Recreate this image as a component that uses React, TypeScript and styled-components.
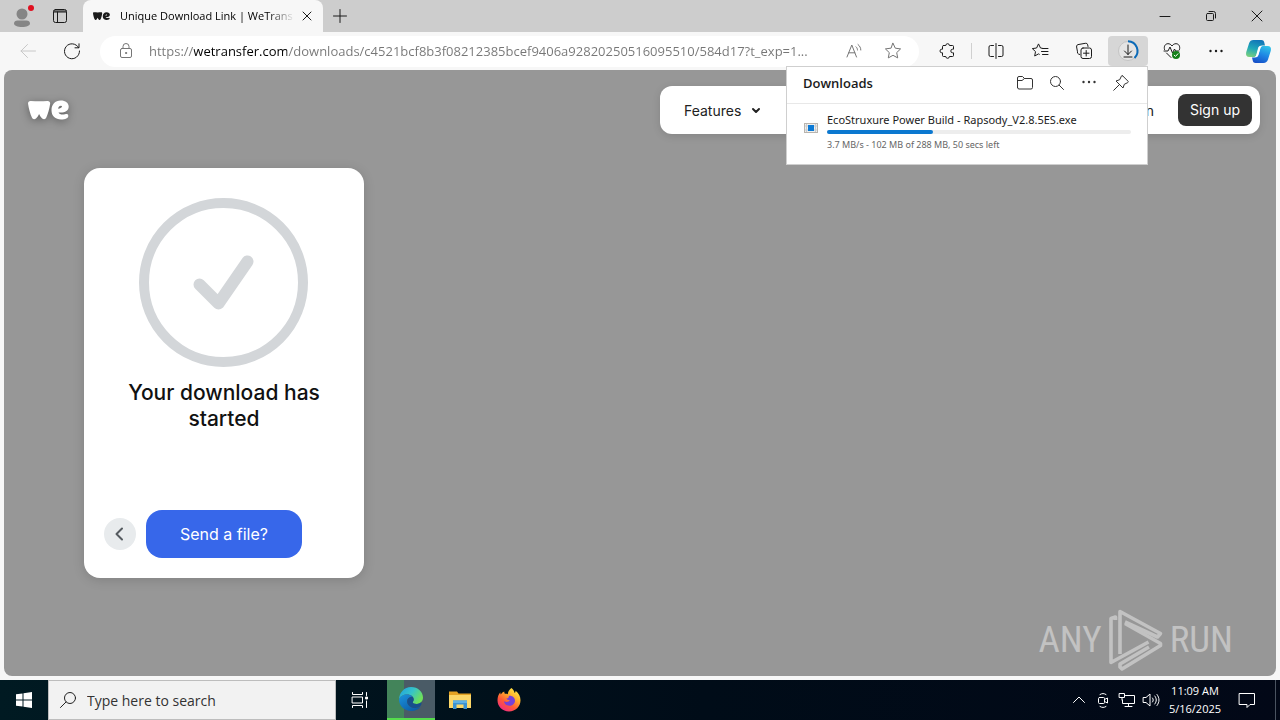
import React from "react";
import styled, { createGlobalStyle } from "styled-components";

const ui = `"Open Sans", "Noto Sans", sans-serif`;
const uiWide = `"Noto Sans", "Open Sans", sans-serif`;
const brand = `Inter, "Liberation Sans", sans-serif`;

const GlobalStyle = createGlobalStyle`
  *, *::before, *::after { box-sizing: border-box; }
  body { margin: 0; font-family: ${ui}; background: #f7f7f7; color: #1b1b1b; }
  button, input { font: inherit; color: inherit; border: 0; padding: 0; margin: 0; background: none; outline: 0; }
  svg { display: block; flex: none; overflow: visible; }
`;

const Desktop = styled.div`
  display: flex;
  flex-direction: column;
  min-height: 100vh;
`;

/* Browser chrome */

const TabStrip = styled.div`
  display: flex;
  height: 32px;
  background: #cdcdcd;
`;

const StripButton = styled.button<{ $width: number }>`
  display: grid;
  place-items: center;
  width: ${(p) => p.$width}px;
  height: 32px;
  flex: none;
`;

const Tab = styled.div`
  display: flex;
  align-items: center;
  width: 240px;
  margin-left: 7px;
  padding: 0 8px 0 10px;
  background: #f7f7f7;
  border-radius: 8px 8px 0 0;
`;

const TabTitle = styled.span`
  flex: 1;
  margin: 0 4px 0 10px;
  white-space: nowrap;
  font-size: 11px;
  line-height: 16px;
  color: #000;
  mask-image: linear-gradient(to right, #000 calc(100% - 28px), transparent);
`;

const TabClose = styled.button`
  display: grid;
  place-items: center;
  width: 16px;
  height: 16px;
`;

const WindowControls = styled.div`
  display: flex;
  margin-left: auto;
`;

const Toolbar = styled.div`
  position: relative;
  z-index: 2;
  display: flex;
  align-items: center;
  gap: 4px;
  height: 38px;
  padding: 0 4px 0 8px;
  background: #f7f7f7;
`;

const ToolButton = styled.button<{ $active?: boolean; $narrow?: boolean }>`
  display: grid;
  place-items: center;
  flex: none;
  width: ${(p) => (p.$narrow ? 36 : 40)}px;
  height: 30px;
  border-radius: 4px;
  color: #1b1b1b;
  background: ${(p) => (p.$active ? "#d6d6d6" : "transparent")};
  &:disabled { color: #c8c8c8; }
`;

const AddressBar = styled.form`
  display: flex;
  align-items: center;
  flex: 1;
  min-width: 0;
  height: 31px;
  margin: 0 4px;
  padding: 0 16px;
  gap: 13px;
  border-radius: 16px;
  background: #fff;
  color: #767676;
`;

const Url = styled.input`
  flex: 1;
  min-width: 0;
  height: 20px;
  font-size: 13px;
  color: #6e6e6e;
  background: linear-gradient(to right, #767676 45px, #000 45px, #000 138px, #767676 138px);
  background-clip: text;
  -webkit-text-fill-color: transparent;
`;

const FieldButton = styled.button`
  display: grid;
  place-items: center;
  width: 20px;
  height: 20px;
  margin-left: 6px;
`;

const Divider = styled.span`
  width: 1px;
  height: 16px;
  background: #d0d0d0;
`;

/* Downloads flyout */

const FlyoutAnchor = styled.div`
  position: relative;
`;

const Flyout = styled.section`
  position: absolute;
  top: 100%;
  right: 0;
  width: 362px;
  background: #fff;
  border: 1px solid #cfcfcf;
`;

const FlyoutHeader = styled.header`
  display: flex;
  align-items: center;
  height: 37px;
  padding: 0 10px 4px 16px;
  border-bottom: 1px solid #e8e8e8;
`;

const FlyoutTitle = styled.h2`
  flex: 1;
  margin: 0;
  font-size: 13px;
  line-height: 20px;
  font-weight: 600;
`;

const FlyoutButton = styled.button`
  display: grid;
  place-items: center;
  width: 32px;
  height: 28px;
  color: #333;
`;

const DownloadItem = styled.div`
  display: flex;
  align-items: flex-start;
  gap: 8px;
  height: 60px;
  padding: 8px 16px 0;
`;

const FileIcon = styled.svg`
  margin-top: 8px;
`;

const DownloadBody = styled.div`
  display: flex;
  flex-direction: column;
  flex: 1;
`;

const FileName = styled.label`
  font-family: ${uiWide};
  font-size: 11px;
  line-height: 16px;
`;

const Progress = styled.progress`
  appearance: none;
  width: 100%;
  height: 4px;
  margin: 2px 0 4px;
  border: 0;
  &::-webkit-progress-bar { background: #ededed; border-radius: 2px; }
  &::-webkit-progress-value { background: #0b78d0; border-radius: 2px; }
`;

const FileStatus = styled.span`
  font-family: ${uiWide};
  font-size: 9px;
  line-height: 14px;
  color: #666;
`;

/* Page */

const Viewport = styled.main`
  position: relative;
  flex: 1;
  margin: 0 4px 4px;
  padding: 16px 16px 98px;
  border-radius: 8px;
  background: #979797;
  font-family: ${brand};
`;

const SiteHeader = styled.header`
  display: flex;
  align-items: center;
  justify-content: space-between;
  padding-left: 8px;
`;

const LogoLink = styled.a`
  display: block;
  filter: drop-shadow(0 2px 4px rgba(0, 0, 0, 0.35));
`;

const SiteNav = styled.nav`
  display: flex;
  align-items: center;
  justify-content: space-between;
  width: min(600px, 80%);
  height: 48px;
  padding: 8px 8px 8px 24px;
  border-radius: 12px;
  background: #fff;
  font-size: 14px;
  box-shadow: 0 2px 8px rgba(0, 0, 0, 0.12);
`;

const NavButton = styled.button`
  display: flex;
  align-items: center;
  gap: 10px;
  color: #222;
`;

const NavGroup = styled.div`
  display: flex;
  align-items: center;
  gap: 24px;
`;

const NavLink = styled.a`
  color: #222;
  text-decoration: none;
`;

const SignUp = styled.a`
  height: 32px;
  padding: 0 12px;
  border-radius: 8px;
  line-height: 32px;
  background: #333;
  color: #fff;
  text-decoration: none;
`;

const Card = styled.section`
  display: flex;
  flex-direction: column;
  align-items: center;
  width: 280px;
  min-height: 410px;
  margin: 34px 0 0 64px;
  padding: 30px 20px 20px;
  border-radius: 16px;
  background: #fff;
  box-shadow: 0 2px 12px rgba(0, 0, 0, 0.15);
`;

const CardTitle = styled.h1`
  width: 210px;
  margin: 13px 0 0;
  font-size: 21px;
  line-height: 26px;
  font-weight: 500;
  text-align: center;
  color: #111;
`;

const CardActions = styled.div`
  display: flex;
  align-items: center;
  align-self: stretch;
  gap: 10px;
  margin-top: auto;
`;

const BackButton = styled.button`
  display: grid;
  place-items: center;
  width: 32px;
  height: 32px;
  border-radius: 50%;
  background: #e8ebed;
  color: #555b60;
`;

const SendButton = styled.button`
  width: 156px;
  height: 48px;
  border-radius: 16px;
  background: #3767ea;
  color: #fff;
  font-size: 16px;
`;

const Watermark = styled.div`
  position: absolute;
  right: 43px;
  bottom: 5px;
  display: flex;
  align-items: center;
  gap: 6px;
  color: #c2c2c2;
  font-family: "Roboto Condensed", "Liberation Sans Narrow", Roboto, sans-serif;
  font-size: 37px;
  line-height: 62px;
  font-weight: 400;
`;

/* Taskbar */

const Taskbar = styled.footer`
  display: flex;
  height: 40px;
  background: linear-gradient(to right, #001a22, #000c18 55%, #020817);
  color: #fff;
`;

const TaskButton = styled.button<{ $open?: boolean }>`
  display: grid;
  place-items: center;
  width: 48px;
  height: 40px;
  background: ${(p) => (p.$open ? "linear-gradient(to right, #43845a 17px, #4a5b66 17px)" : "none")};
  border-bottom: ${(p) => (p.$open ? "2px solid #55dd4c" : "0")};
`;

const TaskApps = styled.div`
  display: flex;
  gap: 1px;
  margin-left: 3px;
`;

const TaskSearch = styled.label`
  display: flex;
  align-items: center;
  width: 288px;
  padding: 0 11px;
  gap: 11px;
  border: 1px solid #bdbdbd;
  background: #f2f2f2;
  color: #222;
`;

const TaskSearchInput = styled.input`
  flex: 1;
  min-width: 0;
  height: 24px;
  font-size: 14px;
  &::placeholder { color: #333; opacity: 1; }
`;

const Tray = styled.div`
  display: flex;
  align-items: center;
  margin-left: auto;
  padding-right: 4px;
`;

const TrayButton = styled.button<{ $wide?: boolean }>`
  display: grid;
  place-items: center;
  width: ${(p) => (p.$wide ? 40 : 24)}px;
  height: 40px;
`;

const Clock = styled.time`
  width: 64px;
  font-size: 11px;
  line-height: 18px;
  text-align: center;
`;

const PeekEdge = styled.span`
  width: 1px;
  height: 40px;
  margin-left: 8px;
  background: #4a5360;
`;

/* Drawings */

function Line({ size = 20, children, w = 1 }: { size?: number; w?: number; children: React.ReactNode }) {
  return (
    <svg width={size} height={size} viewBox={`0 0 ${size} ${size}`} fill="none" stroke="currentColor" strokeWidth={w} strokeLinecap="round" strokeLinejoin="round" aria-hidden="true">
      {children}
    </svg>
  );
}

function WeLogo({ width, color }: { width: number; color: string }) {
  return (
    <svg width={width} height={(width * 20) / 41} viewBox="0 0 41 20" fill={color} aria-hidden="true">
      <path d="M2.6.9C.7 1-.2 2.100 .1 4.100.8 9 2.300 14.300 3.900 17.600c.9 2 2.600 2.200 4.100.9 1.300-1.100 2.300-2.700 3.100-4.500.8 1.800 1.800 3.400 3.100 4.500 1.500 1.300 3.200 1.100 4.100-.9 1.500-3.300 3.100-8.500 3.800-13.500.3-2.200-.7-3.300-2.700-3.200C13.800 1.400 8.200 1.300 2.600.9Z" />
      <path d="M32.800.6C27 .6 23.500 4.700 23.500 10.200c0 5.900 3.900 9.200 9.600 9.200 4.300 0 7.200-1.500 7.200-3.500 0-1.600-1.200-2.200-3.200-1.700-3.400.8-5.500.2-6.600-1.800 5.600.7 10.200-1.200 10.200-5.600C40.700 3 37.500.6 32.800.6Zm-2.700 8.200c.3-2 1.600-3.200 3-3 1.700.3 1.300 2.300-3 3Z" />
    </svg>
  );
}

function EdgeIcon() {
  return (
    <svg width="24" height="24" viewBox="0 0 24 24" aria-hidden="true">
      <defs>
        <linearGradient id="edgeTop" x1="0" y1="0" x2="1" y2="0.5">
          <stop offset="0" stopColor="#1f9fe0" />
          <stop offset="0.55" stopColor="#36c3c9" />
          <stop offset="1" stopColor="#6ee05a" />
        </linearGradient>
        <linearGradient id="edgeLow" x1="0" y1="0" x2="0.8" y2="1">
          <stop offset="0" stopColor="#1b93dd" />
          <stop offset="1" stopColor="#0c59a4" />
        </linearGradient>
      </defs>
      <path d="M0 12.500C.3 5.500 5.300 0 12.100 0 19 0 24 5 24 10.500c0 4-3 6.500-6.500 6.500-2.500 0-3.800-.8-3.800-1.700 0-.7 1-1 1-2.700C14.700 9.800 12 7.500 8.300 7.500 4 7.500 1 9.500 0 12.500Z" fill="url(#edgeTop)" />
      <path d="M0 12.500c1-3 4-5 8.300-5 2.300 0 4.200.9 5.300 2.300-3.400-.4-5.400 1.900-5.400 4.600 0 4 4 6.600 8.300 6.600 2 0 3.700-.5 5.300-1.500C19.800 22.300 16.300 24 12.300 24 5.500 24 0 19 0 12.500Z" fill="url(#edgeLow)" />
      <path d="M8.200 14.400c0-2.700 2-5 5.400-4.600.7.8 1.100 1.800 1.100 2.800 0 1.700-1 2-1 2.700 0 .9 1.300 1.700 3.800 1.700 1.800 0 3.400-.6 4.600-1.700.6.4.6 1.700-.3 3.200-1.600 1.800-3.300 2.500-5.300 2.500-4.300 0-8.300-2.600-8.300-6.600Z" fill="#174f8d" />
    </svg>
  );
}

function FolderIcon() {
  return (
    <svg width="22" height="20" viewBox="0 0 22 20" aria-hidden="true">
      <path d="M0 1.500h8l1.500 2H22V18H0Z" fill="#e5a323" />
      <path d="M0 5h22v13H0Z" fill="#fcd768" />
      <path d="M4 19v-8.500h14V19h-3.500v-4.500h-7V19Z" fill="#3b91d0" />
      <path d="M4 10.500h14V13H4Z" fill="#5fb0e3" />
    </svg>
  );
}

function FirefoxIcon() {
  return (
    <svg width="24" height="24" viewBox="0 0 24 24" aria-hidden="true">
      <defs>
        <linearGradient id="fox" x1="0.85" y1="0" x2="0.2" y2="1">
          <stop offset="0" stopColor="#fff04a" />
          <stop offset="0.35" stopColor="#ffb12b" />
          <stop offset="0.65" stopColor="#ff5a37" />
          <stop offset="1" stopColor="#f0258a" />
        </linearGradient>
      </defs>
      <path d="M14.500 0c2 1.500 2.800 3.300 3.100 5 .9-.7 1-1.500 1-2.300C21.800 5 23.500 8.600 23.500 12.300c0 6.300-5 11.200-11.500 11.200S.5 18.600.5 12.300C.5 9 1.500 6.200 3.300 4.200c0 1 .2 1.700.5 2.200C4.800 5 6 4 7.300 3.500c-.1 1 .1 1.700.6 2.300 1.100-.1 2 0 2.900.4C11 3.500 12.300 1.500 14.500 0Z" fill="url(#fox)" />
      <path d="M12 7.800c3.600-.3 6 2 6 4.900s-2.500 5-5.700 5c-2.900 0-5.200-1.900-5.200-4.400 2 1.300 4.800.8 5.700-1-1.700.1-3-.7-3.500-2 .8.200 1.500 0 2-.4.5-.6.400-1.400.7-2.100Z" fill="#7541d8" />
    </svg>
  );
}

function CopilotIcon() {
  return (
    <svg width="25" height="23" viewBox="0 0 25 23" aria-hidden="true">
      <defs>
        <linearGradient id="copA" x1="0.5" y1="0" x2="0.2" y2="1">
          <stop offset="0" stopColor="#1277b8" />
          <stop offset="0.5" stopColor="#20a8b9" />
          <stop offset="1" stopColor="#7bd07c" />
        </linearGradient>
        <linearGradient id="copB" x1="0.7" y1="0" x2="0.3" y2="1">
          <stop offset="0" stopColor="#2fc1e8" />
          <stop offset="0.5" stopColor="#1e86e4" />
          <stop offset="1" stopColor="#1750c8" />
        </linearGradient>
      </defs>
      <path d="M7.500 0h8c1.500 0 2.300.8 2.700 2.200l.8 3.300h-3c-2 0-3 1-3.600 3l-1.800 6C10 16.400 9 17 7.200 17H3.500C.6 17-.5 15 .2 12.200L3 3.400C3.700 1.200 5.200 0 7.500 0Z" fill="url(#copA)" />
      <path d="M17.500 23h-8c-1.500 0-2.300-.8-2.700-2.200L6 17.500h3c2 0 3-1 3.600-3l1.800-6C15 6.600 16 6 17.800 6h3.700c2.900 0 4 2 3.300 4.800L22 19.600c-.7 2.200-2.200 3.400-4.500 3.400Z" fill="url(#copB)" />
      <path d="M12.200 7.600C12.700 6.500 13.300 6 14.500 6h.8c-.6.600-.9 1.400-1.200 2.500l-1.600 5.700c-.4 1.400-.9 2.300-1.900 2.800H9.200c.6-.6.900-1.400 1.200-2.500Z" fill="#fff" opacity=".9" />
    </svg>
  );
}

function AnyRunMark() {
  return (
    <svg width="56" height="62" viewBox="0 0 56 62" fill="none" stroke="#c2c2c2" strokeWidth="3.600" strokeLinejoin="round" aria-hidden="true">
      <path d="M7.500 11V8L3 9.500V53.500L40.500 33" />
      <path d="M12 45V2.500L52.500 24.500 49.500 28 17 13" />
      <path d="M17 14.500 52.500 34.500V36.500L14 60 12 58V55L41 38" />
    </svg>
  );
}

export default function App() {
  return (
    <>
      <GlobalStyle />
      <Desktop>
        <TabStrip>
          <StripButton $width={44} aria-label="Profile">
            <svg width="20" height="22" viewBox="0 0 20 22" aria-hidden="true">
              <circle cx="10" cy="9" r="5.500" fill="#858585" />
              <path d="M2 18.500C2 16.500 3.500 15.500 5.500 15.500h9c2 0 3.500 1 3.500 3 0 2-3.500 3.500-8 3.500s-8-1.500-8-3.500Z" fill="#858585" />
              <circle cx="19" cy="3" r="3" fill="#e01020" />
            </svg>
          </StripButton>
          <StripButton $width={32} aria-label="Tab actions">
            <Line size={14}>
              <rect x=".5" y=".5" width="13" height="13" rx="2" />
              <path d="M1 2h12M1 3h12M4.500 3v10" />
            </Line>
          </StripButton>
          <Tab>
            <WeLogo width={17} color="#1b1b1b" />
            <TabTitle>Unique Download Link | WeTrans</TabTitle>
            <TabClose aria-label="Close tab">
              <Line size={8} w={1}><path d="M0 0l8 8M8 0 0 8" /></Line>
            </TabClose>
          </Tab>
          <StripButton $width={34} aria-label="New tab">
            <Line size={14} w={1}><path d="M7 .5v13M.5 7h13" /></Line>
          </StripButton>
          <WindowControls>
            <StripButton $width={46} aria-label="Minimize"><Line size={10}><path d="M0 5.500h10" /></Line></StripButton>
            <StripButton $width={46} aria-label="Restore">
              <Line size={10}><rect x=".5" y="2.500" width="7" height="7" rx="1" /><path d="M3 .5h4.500a2 2 0 0 1 2 2V7" /></Line>
            </StripButton>
            <StripButton $width={46} aria-label="Close"><Line size={10}><path d="M0 0l10 10M10 0 0 10" /></Line></StripButton>
          </WindowControls>
        </TabStrip>

        <Toolbar>
          <ToolButton aria-label="Back" disabled>
            <Line size={16}><path d="M15.500 8H1M7.500 1.500 1 8l6.500 6.500" /></Line>
          </ToolButton>
          <ToolButton aria-label="Refresh">
            <Line size={16}><path d="M14.500 4.500A7.500 7.500 0 1 0 15.500 8M15 .8v4h-4" /></Line>
          </ToolButton>
          <AddressBar>
            <Line size={20}>
              <rect x="4.500" y="7.500" width="11" height="9" rx="1.500" />
              <path d="M7 7.500V5.500a3 3 0 0 1 6 0v2" />
              <circle cx="10" cy="12" r=".6" fill="currentColor" />
            </Line>
            <Url aria-label="Address" readOnly value="https://wetransfer.com/downloads/c4521bcf8b3f08212385bcef9406a92820250516095510/584d17?t_exp=1..." />
            <FieldButton type="button" aria-label="Read aloud">
              <Line size={16}>
                <path d="M1 14 5.800 2 10.500 14M2.800 9.800h6M10 3.800c1 .9 1.500 2 1.500 3.200M12 1.500c1.900 1.600 2.800 3.400 2.800 5.500" />
              </Line>
            </FieldButton>
            <FieldButton type="button" aria-label="Add to favorites">
              <Line size={18}>
                <path d="M9 1.300l2.300 4.900 5.300.7-3.900 3.700 1 5.300L9 13.300l-4.700 2.600 1-5.300L1.400 6.900l5.300-.7Z" />
              </Line>
            </FieldButton>
          </AddressBar>
          <ToolButton aria-label="Extensions">
            <Line size={16}>
              <path d="M4.500 2.500h2.300a1.800 1.800 0 0 1 3.600 0h3.100a1 1 0 0 1 1 1v2.700h-.9a1.800 1.800 0 0 0 0 3.600h.9v2.700a1 1 0 0 1-1 1h-3.100a1.800 1.800 0 0 1-3.600 0H4.500a1 1 0 0 1-1-1V9.800h-.7a1.800 1.800 0 0 1 0-3.600h.7V3.500a1 1 0 0 1 1-1Z" />
            </Line>
          </ToolButton>
          <Divider />
          <ToolButton aria-label="Split screen">
            <Line size={16}>
              <path d="M5.500 2.500h-3A1.500 1.500 0 0 0 1 4v8a1.500 1.500 0 0 0 1.500 1.500h3M10.500 2.500h3A1.500 1.500 0 0 1 15 4v8a1.500 1.500 0 0 1-1.500 1.500h-3M8 .5v15" />
            </Line>
          </ToolButton>
          <ToolButton aria-label="Favorites">
            <Line size={16}>
              <path d="M10.300 5.300 8.500 5 6.500.9 4.600 5 .3 5.600l3.200 3-.8 4.400 3.800-2.100.8.4M10.500 5.500H16M9.500 8.500H16M10.500 11.500H16" />
            </Line>
          </ToolButton>
          <ToolButton aria-label="Collections">
            <Line size={16}>
              <rect x="5" y="5" width="10.500" height="10.500" rx="2" />
              <path d="M10.200 7.500v5.500M7.500 10.200H13M3.800 11.500 2.500 11a1.800 1.800 0 0 1-1-2.200L.6 4A2 2 0 0 1 2 1.600L9.300.3a2 2 0 0 1 2.400 1.500L12 3.500" />
            </Line>
          </ToolButton>
          <FlyoutAnchor>
            <ToolButton $active aria-label="Downloads">
              <Line size={22}>
                <circle cx="11" cy="11" r="9.500" fill="#e4e4e4" stroke="#c4c4c4" />
                <path d="M11 1.300A9.700 9.700 0 0 1 17.500 18" stroke="#0b6ab8" strokeWidth="2" strokeLinecap="butt" />
                <path d="M11 5v9.500M7.500 11l3.500 3.500 3.500-3.500M7 17h8" />
              </Line>
            </ToolButton>
            <Flyout aria-label="Downloads">
              <FlyoutHeader>
                <FlyoutTitle>Downloads</FlyoutTitle>
                <FlyoutButton aria-label="Open downloads folder">
                  <Line size={16}><path d="M.5 12.500V3A1.500 1.500 0 0 1 2 1.500h3.500l2 2H14A1.500 1.500 0 0 1 15.500 5v7.500A1.500 1.500 0 0 1 14 14H2a1.500 1.500 0 0 1-1.500-1.500ZM.5 5.500H5l2.500-2" /></Line>
                </FlyoutButton>
                <FlyoutButton aria-label="Search downloads">
                  <Line size={14}><circle cx="5.500" cy="5.500" r="5" /><path d="M9.200 9.200 13.500 13.500" /></Line>
                </FlyoutButton>
                <FlyoutButton aria-label="More options">
                  <svg width="14" height="4" viewBox="0 0 14 4" fill="currentColor"><circle cx="1.500" cy="1" r="1.200" /><circle cx="7" cy="1" r="1.200" /><circle cx="12.500" cy="1" r="1.200" /></svg>
                </FlyoutButton>
                <FlyoutButton aria-label="Pin">
                  <Line size={16}><path d="M9.700.9 15 6.200c.5.5.3 1.100-.3 1.400L11.300 9.300 10 13 3 6l3.700-1.300L8.400 1.200c.3-.6.900-.7 1.300-.3ZM6.300 9.700.7 15.300" /></Line>
                </FlyoutButton>
              </FlyoutHeader>
              <DownloadItem>
                <FileIcon width="16" height="16" viewBox="0 0 16 16" aria-hidden="true">
                  <rect x="1.500" y="3.500" width="13" height="9" fill="#eef0ee" stroke="#b9b4ae" />
                  <path d="M2 6h12M2 10h12M3.500 4v8M12.500 4v8" stroke="#c9ccd0" />
                  <rect x="5" y="5" width="6" height="6" fill="#0c7ad6" />
                </FileIcon>
                <DownloadBody>
                  <FileName htmlFor="download-progress">EcoStruxure Power Build - Rapsody_V2.8.5ES.exe</FileName>
                  <Progress id="download-progress" max={100} value={35} />
                  <FileStatus>3.7 MB/s - 102 MB of 288 MB, 50 secs left</FileStatus>
                </DownloadBody>
              </DownloadItem>
            </Flyout>
          </FlyoutAnchor>
          <ToolButton aria-label="Browser essentials">
            <Line size={18}>
              <path d="M1.500 7.500C.5 4 2.500 1.700 5 1.700c1.700 0 3 .8 4 2.300 1-1.500 2.300-2.300 4-2.300 2.500 0 4.500 2.300 3.500 5.800M3.500 11 8 15.500M1 9h4l2-4 2.500 6L11.500 7l1 2H16" />
              <circle cx="13" cy="13" r="4" fill="#14801a" stroke="none" />
              <path d="M11.200 13.200l1.300 1.200 2.400-2.600" stroke="#fff" />
            </Line>
          </ToolButton>
          <ToolButton aria-label="Settings and more">
            <svg width="14" height="4" viewBox="0 0 14 4" fill="currentColor"><circle cx="1.500" cy="2" r="1.200" /><circle cx="7" cy="2" r="1.200" /><circle cx="12.500" cy="2" r="1.200" /></svg>
          </ToolButton>
          <ToolButton $narrow aria-label="Copilot"><CopilotIcon /></ToolButton>
        </Toolbar>

        <Viewport>
          <SiteHeader>
            <LogoLink href="#" aria-label="WeTransfer"><WeLogo width={41} color="#fff" /></LogoLink>
            <SiteNav>
              <NavButton>
                Features
                <Line size={10} w={2}><path d="M2 4l3 3 3-3" /></Line>
              </NavButton>
              <NavGroup>
                <NavLink href="#">Log in</NavLink>
                <SignUp href="#">Sign up</SignUp>
              </NavGroup>
            </SiteNav>
          </SiteHeader>
          <Card>
            <svg width="170" height="169" viewBox="0 0 170 169" fill="none" stroke="#d3d6d9" aria-hidden="true">
              <circle cx="84.500" cy="84.500" r="79.500" strokeWidth="10" />
              <path d="M60.500 86.500 79.500 105.500 108.500 63.500" strokeWidth="12" strokeLinecap="round" strokeLinejoin="round" />
            </svg>
            <CardTitle>Your download has started</CardTitle>
            <CardActions>
              <BackButton aria-label="Go back">
                <Line size={14} w={2}><path d="M9 1.500 3.500 7 9 12.500" /></Line>
              </BackButton>
              <SendButton>Send a file?</SendButton>
            </CardActions>
          </Card>
          <Watermark>
            <span>ANY</span>
            <AnyRunMark />
            <span>RUN</span>
          </Watermark>
        </Viewport>

        <Taskbar>
          <TaskButton aria-label="Start">
            <svg width="16" height="16" viewBox="0 0 16 16" fill="#fff"><path d="M0 2.300 6.500 1.400v6.100H0ZM7.500 1.200 16 0v7.500H7.500ZM0 8.500h6.500v6.100L0 13.700ZM7.500 8.500H16V16l-8.500-1.200Z" /></svg>
          </TaskButton>
          <TaskSearch>
            <Line size={16} w={1}><circle cx="10" cy="6" r="5.500" /><path d="M6 10 .5 15.500" /></Line>
            <TaskSearchInput type="text" aria-label="Search" placeholder="Type here to search" />
          </TaskSearch>
          <TaskButton aria-label="Task view">
            <Line size={16}><path d="M.5.5v2h10v-2M.5 15.500v-2h10v2M14.500.5v3M14.500 9v6.500" /><rect x=".5" y="5" width="10" height="6" /><rect x="14" y="5" width="1.500" height="2" fill="currentColor" /></Line>
          </TaskButton>
          <TaskApps>
            <TaskButton $open aria-label="Microsoft Edge"><EdgeIcon /></TaskButton>
            <TaskButton aria-label="File Explorer"><FolderIcon /></TaskButton>
            <TaskButton aria-label="Firefox"><FirefoxIcon /></TaskButton>
          </TaskApps>
          <Tray>
            <TrayButton aria-label="Show hidden icons"><Line size={12}><path d="M.5 8.500 6 3l5.500 5.500" /></Line></TrayButton>
            <TrayButton aria-label="Meet now"><Line size={14}><rect x="2.500" y="4.500" width="6" height="6" rx="1" /><path d="M8.500 6.500l3-1.500v5l-3-1.500M4 1.500c2-1.300 4-1.300 6 0M4 13.500c2 1.300 4 1.300 6 0" /></Line></TrayButton>
            <TrayButton aria-label="Network"><Line size={16}><path d="M6.500 3.500h9v8h-12V8M6 14.500h7M9.500 11.500v3M.5 1.500h5v4h-5ZM3 5.500V8" /></Line></TrayButton>
            <TrayButton aria-label="Volume"><Line size={16}><path d="M.5 5.500H3L7 2v12L3 10.500H.5ZM9.500 6c1 1.300 1 2.700 0 4M11.800 4c2 2.600 2 5.400 0 8M14 2.500c2.700 3.700 2.700 7.300 0 11" /></Line></TrayButton>
            <Clock>11:09 AM<br />5/16/2025</Clock>
            <TrayButton $wide aria-label="Notifications"><Line size={16}><path d="M.5 1.500h15v11H11L8 15.500V12.500H.5Z" /></Line></TrayButton>
            <PeekEdge />
          </Tray>
        </Taskbar>
      </Desktop>
    </>
  );
}
